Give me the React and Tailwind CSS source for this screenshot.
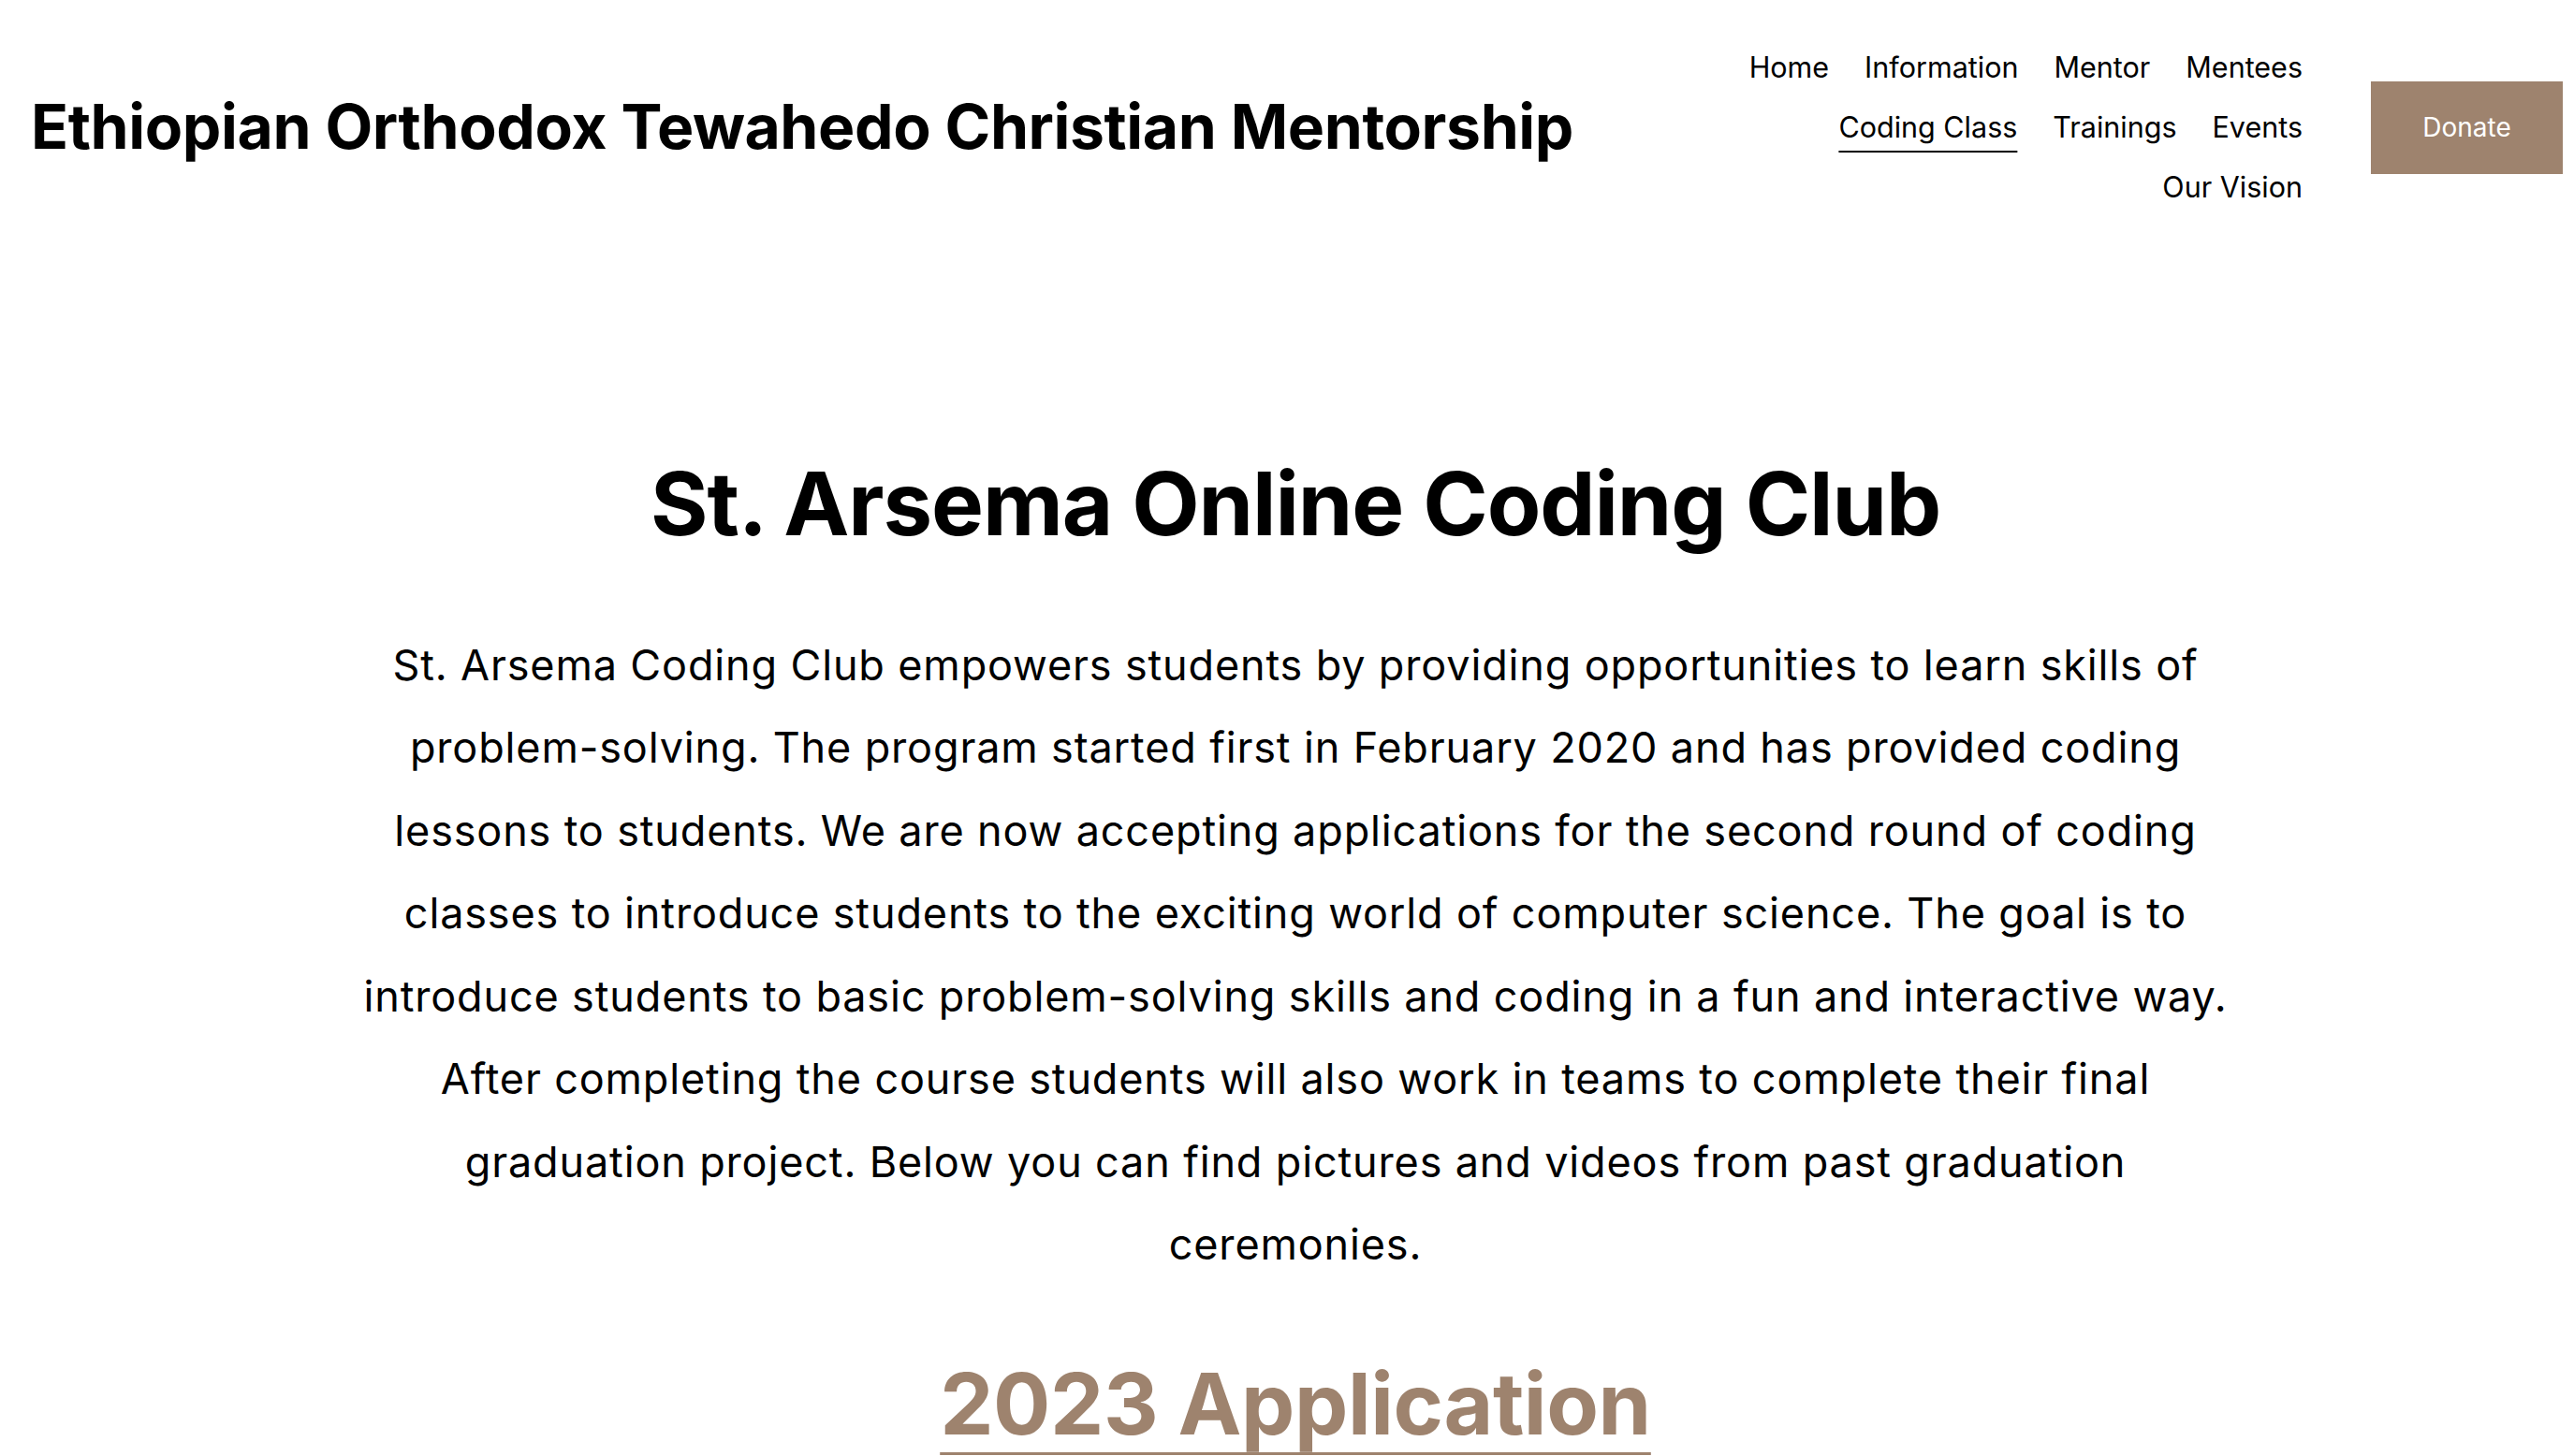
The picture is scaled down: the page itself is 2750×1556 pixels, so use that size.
export default function App() {
  const row = "flex gap-[38px] leading-[64px]";
  const link = "text-black no-underline whitespace-nowrap";
  return (
    <div className="min-h-screen bg-white font-['Inter',sans-serif] text-black antialiased">
      <header className="flex items-center justify-between pl-[33px] pr-[12px] pt-[40px]">
        <h1 className="text-[66px] font-bold leading-[1.2] tracking-[-0.4px] whitespace-nowrap">
          Ethiopian Orthodox Tewahedo Christian Mentorship
        </h1>
        <div className="flex items-center">
          <nav className="flex flex-col items-end text-[30.5px]">
            <div className={row}>
              <a className={link}>Home</a>
              <a className={link}>Information</a>
              <a className={link}>Mentor</a>
              <a className={link}>Mentees</a>
            </div>
            <div className={row}>
              <a className={`${link} underline decoration-2 underline-offset-[14px]`} style={{ textDecorationLine: "underline" }}>Coding Class</a>
              <a className={link}>Trainings</a>
              <a className={link}>Events</a>
            </div>
            <div className={row}>
              <a className={link}>Our Vision</a>
            </div>
          </nav>
          <a className="ml-[73px] flex h-[99px] w-[205px] items-center justify-center bg-[#9e836e] text-[28px] text-white">
            Donate
          </a>
        </div>
      </header>
      <main className="flex flex-col items-center pl-[18px] pt-[250px] pb-[80px]">
        <h2 className="text-[94px] font-bold leading-[1.2] tracking-[-1.1px] whitespace-nowrap">
          St. Arsema Online Coding Club
        </h2>
        <p className="mt-[72px] text-center text-[45px] leading-[88.5px] tracking-[0.85px] whitespace-nowrap">
          St. Arsema Coding Club empowers students by providing opportunities to learn skills of
          <br />
          problem-solving. The program started first in February 2020 and has provided coding
          <br />
          lessons to students. We are now accepting applications for the second round of coding
          <br />
          classes to introduce students to the exciting world of computer science. The goal is to
          <br />
          introduce students to basic problem-solving skills and coding in a fun and interactive way.
          <br />
          After completing the course students will also work in teams to complete their final
          <br />
          graduation project. Below you can find pictures and videos from past graduation
          <br />
          ceremonies.
        </p>
        <h3 className="mt-[71px] text-[91px] font-bold leading-[1.2] tracking-[-0.4px] text-[#9e836e] underline decoration-[3px] underline-offset-[19px] whitespace-nowrap">
          2023 Application
        </h3>
      </main>
    </div>
  );
}
